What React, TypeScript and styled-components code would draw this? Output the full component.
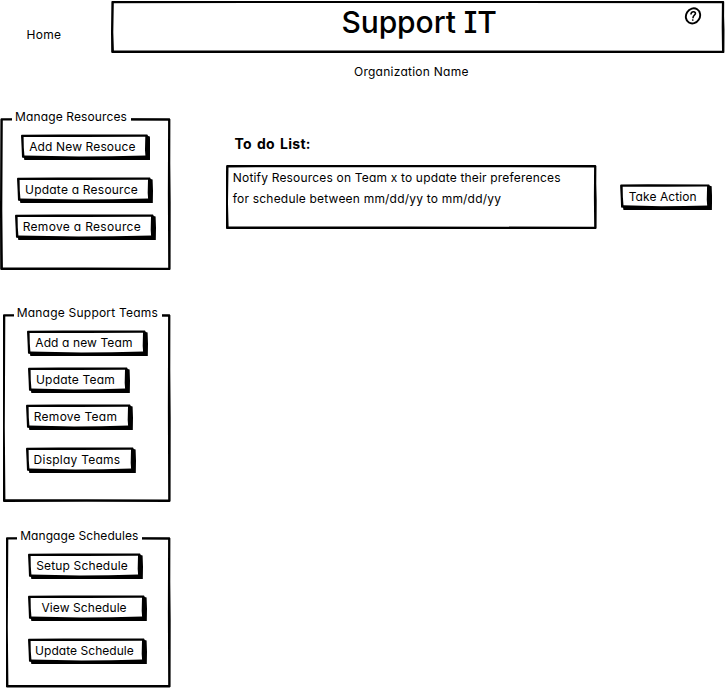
import React from "react";
import styled, { createGlobalStyle } from "styled-components";

const GlobalStyle = createGlobalStyle`
  *, *::before, *::after { box-sizing: border-box; }
  body {
    margin: 0;
    background: #fff;
    color: #000;
    font: 425 12px/16px Inter, "Noto Sans", sans-serif;
    font-feature-settings: "cv11", "cv08";
  }
`;

const Page = styled.div`
  display: flex;
  flex-direction: column;
  width: 725px;
  height: 688px;
  overflow: hidden;
`;

const Text = styled.span<{ $track?: number; $word?: number }>`
  letter-spacing: ${(p) => p.$track ?? 0.25}px;
  word-spacing: ${(p) => p.$word ?? 0}px;
  white-space: nowrap;
`;

/* Box with an uneven, pen-drawn outline: black silhouette under a white face. */
const SketchBox = styled.div`
  position: relative;
  isolation: isolate;
  &::before,
  &::after {
    content: "";
    position: absolute;
    inset: 0;
    z-index: -1;
  }
  &::before {
    background: #000;
    clip-path: polygon(
      1px 0.2px, 50% 0, calc(100% - 1px) 0.2px, calc(100% - 0.3px) 1.2px,
      calc(100% - 0.4px) 30%, 100% 55%, calc(100% - 0.1px) calc(100% - 0.8px),
      calc(100% - 1px) 100%, 50% calc(100% - 0.1px), 1.2px 100%, 0.2px calc(100% - 1px),
      0 60%, 0.4px 1.2px
    );
  }
  &::after {
    background: #fff;
    clip-path: polygon(
      2.8px 2.6px, 50% 2.4px, calc(100% - 2.6px) 2.7px, calc(100% - 2.8px) 50%,
      calc(100% - 2.5px) calc(100% - 2.5px), 50% calc(100% - 2.6px),
      2.9px calc(100% - 2.6px), 2.3px 60%
    );
  }
`;

const TopRow = styled.header`
  display: flex;
  padding-top: 0.6px;
`;

const HomeLink = styled.div`
  width: 111px;
  padding: 26px 0 0 26.6px;
`;

const Banner = styled(SketchBox)`
  display: flex;
  justify-content: space-between;
  width: 613.5px;
  height: 52.6px;
  padding: 0 23px 0 230.4px;
`;

const Title = styled.h1`
  margin: 2px 0 0;
  font-size: 30px;
  font-weight: 500;
  line-height: 38px;
  letter-spacing: -0.08px;
`;

const HelpIcon = styled.svg`
  width: 18px;
  height: 18px;
  margin-top: 6px;
`;

const Organization = styled.div`
  height: 64.8px;
  padding: 10.8px 0 0 354px;
`;

const Body = styled.div`
  display: flex;
`;

const Sidebar = styled.nav`
  display: flex;
  flex-direction: column;
  align-items: flex-end;
  width: 170.7px;
`;

const Panel = styled(SketchBox)<{ $width: number; $height: number; $gapAfter?: number }>`
  display: flex;
  flex-direction: column;
  align-items: flex-start;
  flex: none;
  width: ${(p) => p.$width}px;
  height: ${(p) => p.$height}px;
  margin-bottom: ${(p) => p.$gapAfter ?? 0}px;
`;

const Legend = styled.div<{ $left: number; $width: number; $indent: number }>`
  height: 16px;
  margin: -9px 0 0 ${(p) => p.$left}px;
  width: ${(p) => p.$width}px;
  padding-left: ${(p) => p.$indent}px;
  background: #fff;
`;

const SketchButton = styled.button<{
  $width: number;
  $indent: number;
  $left?: number;
  $top?: number;
}>`
  position: relative;
  isolation: isolate;
  display: flex;
  flex: none;
  width: ${(p) => p.$width}px;
  height: 26px;
  margin: ${(p) => p.$top ?? 0}px 0 0 ${(p) => p.$left ?? 0}px;
  padding: 4px 0 0 ${(p) => p.$indent}px;
  border: 0;
  background: none;
  color: inherit;
  font: inherit;
  font-feature-settings: inherit;
  cursor: pointer;
  &::before,
  &::after {
    content: "";
    position: absolute;
    inset: -0.6px 0 0.6px;
    z-index: -1;
  }
  &::before {
    background: #000;
    clip-path: polygon(
      0.6px 0.3px, 30% 0, calc(100% - 3px) 0.2px, calc(100% - 2.2px) 1.6px,
      calc(100% - 0.4px) 2px, 100% 50%, calc(100% - 0.2px) 100%, 3.4px 100%,
      3px calc(100% - 2.4px), 1px calc(100% - 2.8px), 0.6px 50%, 0 1.2px
    );
  }
  &::after {
    background: #fff;
    clip-path: polygon(
      2.6px 2.6px, 50% 2.5px, calc(100% - 5px) 2.4px, calc(100% - 5.3px) 60%,
      calc(100% - 4.9px) calc(100% - 4.8px), 70% calc(100% - 4.1px),
      45% calc(100% - 4px), 3.4px calc(100% - 5px), 2.8px 50%
    );
  }
`;

const Content = styled.main`
  display: flex;
  flex-direction: column;
  padding: 18px 0 0 55px;
`;

const TodoHeading = styled.h2`
  margin: 0 0 12.8px 8.8px;
  font-size: 14px;
  line-height: 16px;
  font-weight: 650;
`;

const TodoRow = styled.div`
  display: flex;
  align-items: flex-start;
  gap: 23.4px;
`;

const TodoBox = styled(SketchBox)`
  display: flex;
  flex-direction: column;
  width: 371px;
  height: 64.4px;
  padding: 2px 0 0 7.1px;
  line-height: 21px;
`;

type Item = { label: string; left: number; top: number; width: number; indent: number; track: number };
type Group = {
  title: string;
  track: number;
  width: number;
  height: number;
  gapAfter: number;
  legend: [number, number, number];
  items: Item[];
};

const groups: Group[] = [
  {
    title: "Manage Resources", track: 0.12, width: 170.7, height: 152.2, gapAfter: 43.8, legend: [12, 119, 3.1],
    items: [
      { label: "Add New Resouce", left: 21, top: 10, width: 129.3, indent: 8.2, track: 0.13 },
      { label: "Update a Resource", left: 17, top: 17, width: 136, indent: 8, track: 0.22 },
      { label: "Remove a Resource", left: 15, top: 11, width: 141, indent: 7.7, track: 0.32 },
    ],
  },
  {
    title: "Manage Support Teams", track: 0.22, width: 168.2, height: 188, gapAfter: 35, legend: [11.5, 148, 2.7],
    items: [
      { label: "Add a new Team", left: 24.5, top: 10, width: 121, indent: 8.3, track: 0.1 },
      { label: "Update Team", left: 25.5, top: 11, width: 102, indent: 8, track: 0.19 },
      { label: "Remove Team", left: 23.5, top: 11, width: 107, indent: 7.8, track: 0.26 },
      { label: "Display Teams", left: 23.5, top: 17, width: 110, indent: 7.6, track: 0.24 },
    ],
  },
  {
    title: "Mangage Schedules", track: 0.07, width: 165.2, height: 150.6, gapAfter: 0, legend: [11.5, 125, 3.2],
    items: [
      { label: "Setup Schedule", left: 22.5, top: 10, width: 115, indent: 8.2, track: 0.16 },
      { label: "View Schedule", left: 22.5, top: 16, width: 119, indent: 13.5, track: 0.08 },
      { label: "Update Schedule", left: 22.5, top: 17, width: 119, indent: 7.1, track: 0.04 },
    ],
  },
];

export default function App() {
  return (
    <Page>
      <GlobalStyle />
      <TopRow>
        <HomeLink>
          <Text $track={0.3}>Home</Text>
        </HomeLink>
        <Banner>
          <Title>Support IT</Title>
          <HelpIcon viewBox="0 0 18 18" fill="none" stroke="#000" strokeLinecap="round" strokeLinejoin="round">
            <ellipse cx="9" cy="8.9" rx="6.9" ry="7.8" strokeWidth="1.9" transform="rotate(32 9 8.9)" />
            <path d="M7 6.9C7.2 5.3 8.4 4.6 9.6 4.7C11 4.8 11.8 5.8 11.3 7C10.9 8 9.3 8.6 9 10.6" strokeWidth="1.6" />
            <path d="M8.7 13L8.8 13" strokeWidth="1.7" />
          </HelpIcon>
        </Banner>
      </TopRow>
      <Organization>
        <Text $track={0.25}>Organization Name</Text>
      </Organization>
      <Body>
        <Sidebar>
          {groups.map((g) => (
            <Panel key={g.title} $width={g.width} $height={g.height} $gapAfter={g.gapAfter}>
              <Legend $left={g.legend[0]} $width={g.legend[1]} $indent={g.legend[2]}>
                <Text $track={g.track}>{g.title}</Text>
              </Legend>
              {g.items.map((b) => (
                <SketchButton key={b.label} $left={b.left} $top={b.top} $width={b.width} $indent={b.indent}>
                  <Text $track={b.track}>{b.label}</Text>
                </SketchButton>
              ))}
            </Panel>
          ))}
        </Sidebar>
        <Content>
          <TodoHeading>
            <Text $track={0.3} $word={1.4}>To do List:</Text>
          </TodoHeading>
          <TodoRow>
            <TodoBox>
              <Text $track={0.18}>Notify Resources on Team x to update their preferences</Text>
              <Text $track={0.2}>for schedule between mm/dd/yy to mm/dd/yy</Text>
            </TodoBox>
            <SketchButton $top={20} $width={92} $indent={8.6}>
              <Text $track={0.08}>Take Action</Text>
            </SketchButton>
          </TodoRow>
        </Content>
      </Body>
    </Page>
  );
}
